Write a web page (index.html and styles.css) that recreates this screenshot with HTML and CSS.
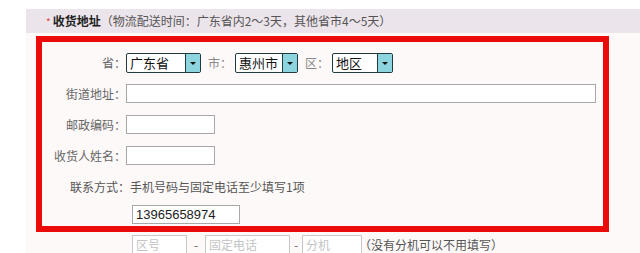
FILE: index.html
```html
<!DOCTYPE html>
<html lang="zh-CN">
<head>
    <meta charset="UTF-8">
    <title>收货地址</title>
    <link rel="stylesheet" href="styles.css">
</head>
<body>
    <div class="panel">
        <div class="panel-head">
            <span class="star">*</span><b>收货地址</b><span class="note">（物流配送时间：广东省内2～3天，其他省市4～5天）</span>
        </div>
        <div class="panel-body">
            <div class="red-box">
                <div class="row">
                    <label class="label">省：</label>
                    <div class="select w75"><span class="select-text">广东省</span><span class="arrow"></span></div>
                    <label class="label-inline">市：</label>
                    <div class="select w63"><span class="select-text">惠州市</span><span class="arrow"></span></div>
                    <label class="label-inline">区：</label>
                    <div class="select w61"><span class="select-text">地区</span><span class="arrow"></span></div>
                </div>
                <div class="row">
                    <label class="label">街道地址：</label>
                    <input type="text" class="field street">
                </div>
                <div class="row">
                    <label class="label">邮政编码：</label>
                    <input type="text" class="field short">
                </div>
                <div class="row">
                    <label class="label">收货人姓名：</label>
                    <input type="text" class="field short">
                </div>
                <div class="row">
                    <span class="hint">联系方式：手机号码与固定电话至少填写1项</span>
                </div>
                <div class="row last">
                    <input type="text" class="field mobile" value="13965658974">
                </div>
            </div>
            <div class="phone-row">
                <input type="text" class="field light area" placeholder="区号">
                <span class="dash">-</span>
                <input type="text" class="field light tel" placeholder="固定电话">
                <span class="dash narrow">-</span>
                <input type="text" class="field light ext" placeholder="分机">
                <span class="ext-note">（没有分机可以不用填写）</span>
            </div>
        </div>
    </div>
</body>
</html>
```

FILE: styles.css
```css
body {
    margin: 0;
    background-color: #fff;
    font-family: "Noto Sans CJK SC", "Liberation Sans", sans-serif;
    font-size: 12px;
    color: #555;
}
.panel {
    margin: 9px 0 0 26px;
}
.panel-head {
    height: 24px;
    line-height: 24px;
    padding-left: 20px;
    background-color: #ece4eb;
    white-space: nowrap;
}
.panel-head .star {
    color: #e04545;
    font-size: 10px;
    margin-right: 2px;
}
.panel-head b {
    color: #222;
}
.panel-head .note {
    color: #555;
}
.panel-body {
    background-color: #fdf9f9;
    padding: 3px 0 0 10px;
    height: 220px;
}
.red-box {
    box-sizing: border-box;
    width: 573px;
    height: 196px;
    border: 6px solid #ec0b0b;
    padding-top: 5px;
}
.row {
    display: flex;
    align-items: center;
    height: 31px;
}
.row.last {
    height: 24px;
    padding-left: 90px;
}
.label {
    width: 84px;
    text-align: right;
    color: #666;
}
.label-inline {
    margin: 0 3px 0 7px;
    color: #888;
}
.hint {
    padding-left: 28px;
    color: #555;
}
.select {
    box-sizing: border-box;
    display: flex;
    height: 20px;
    border: 1px solid #203c42;
    border-radius: 2px;
    background-color: #fff;
    overflow: hidden;
}
.w75 { width: 75px; }
.w63 { width: 63px; }
.w61 { width: 61px; }
.select-text {
    flex: 1;
    padding-left: 3px;
    font-size: 13px;
    line-height: 18px;
    color: #111;
}
.arrow {
    width: 14px;
    background-color: #8dd5de;
    border-left: 1px solid #203c42;
    position: relative;
}
.arrow::after {
    content: "";
    position: absolute;
    left: 4px;
    top: 8px;
    border-left: 3px solid transparent;
    border-right: 3px solid transparent;
    border-top: 3px solid #111;
}
.field {
    box-sizing: border-box;
    height: 19px;
    margin: 0;
    padding: 0 3px;
    border: 1px solid #a8a8a8;
    background-color: #fff;
    font-family: "Liberation Sans", sans-serif;
    font-size: 13px;
    color: #222;
}
.street { width: 470px; }
.short { width: 89px; }
.mobile { width: 108px; }
.phone-row {
    display: flex;
    align-items: center;
    padding: 3px 0 0 96px;
}
.field.light {
    border-color: #c8c8c8;
    font-family: "Noto Sans CJK SC", sans-serif;
    font-size: 12px;
}
.field.light::placeholder {
    color: #c4c4c4;
}
.area { width: 55px; }
.tel { width: 85px; }
.ext { width: 60px; }
.dash {
    width: 18px;
    text-align: center;
    color: #666;
}
.dash.narrow {
    width: 12px;
}
.ext-note {
    margin-left: -3px;
    color: #555;
}
```
